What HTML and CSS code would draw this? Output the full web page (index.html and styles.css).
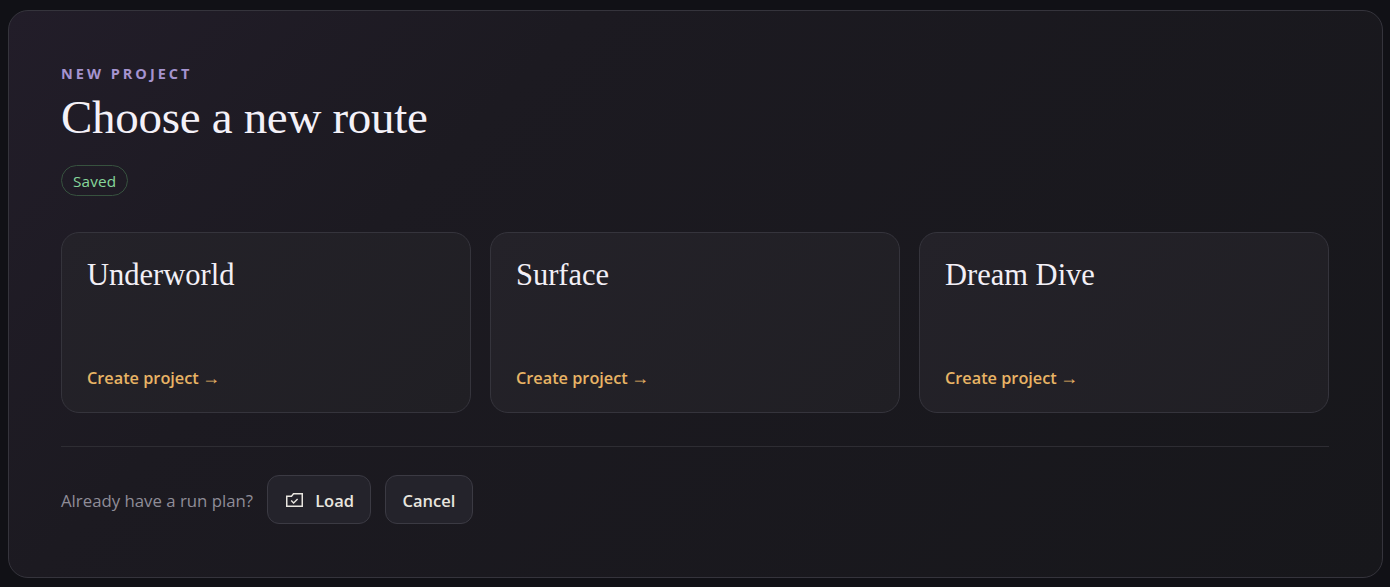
FILE: index.html
```html
<!DOCTYPE html>
<html lang="en">
<head>
<meta charset="utf-8">
<title>New project</title>
<link rel="stylesheet" href="styles.css">
</head>
<body>
<main class="panel">
  <p class="eyebrow">NEW PROJECT</p>
  <h1 class="title">Choose a new route</h1>
  <span class="badge">Saved</span>
  <section class="cards">
    <a class="card"><h2 class="card-title">Underworld</h2><span class="card-link">Create project <span class="arrow">→</span></span></a>
    <a class="card"><h2 class="card-title">Surface</h2><span class="card-link">Create project <span class="arrow">→</span></span></a>
    <a class="card"><h2 class="card-title">Dream Dive</h2><span class="card-link">Create project <span class="arrow">→</span></span></a>
  </section>
  <footer class="footer">
    <span class="hint">Already have a run plan?</span>
    <button class="btn btn-load">
      <svg class="icon" viewBox="0 0 17 14" width="17" height="14" fill="none" stroke="currentColor" stroke-width="1.5"><path d="M.75 13.25V3.25H5.5L7.5.75H16.25V13.25Z"/><path d="M5.2 7.4L7.6 9.9L11.6 5.9" stroke-width="1.4"/></svg>
      Load
    </button>
    <button class="btn btn-cancel">Cancel</button>
  </footer>
</main>
</body>
</html>
```
FILE: styles.css
```css
* { box-sizing: border-box; }
html, body { height: 100%; }
body {
  margin: 0;
  padding: 10px 7px 9px 8px;
  background: #111116;
  font-family: "Open Sans", "Noto Sans", sans-serif;
  overflow: hidden;
}
.panel {
  height: 568px;
  padding: 52px 53px 0 52px;
  border: 1px solid #35343c;
  border-radius: 20px;
  background: linear-gradient(135deg, #221d29 0%, #1c1a21 30%, #17171b 100%);
}
.eyebrow {
  margin: 0;
  height: 22px;
  font-size: 14.5px;
  line-height: 22px;
  font-weight: 700;
  letter-spacing: 3px;
  color: #a593cf;
}
.title {
  margin: 9px 0 0;
  height: 58px;
  font-family: "Liberation Serif", serif;
  font-size: 47px;
  line-height: 46px;
  font-weight: 400;
  letter-spacing: -0.3px;
  color: #f4f1f8;
}
.badge {
  display: inline-flex;
  align-items: center;
  height: 31px;
  margin-top: 13px;
  padding: 0 11px;
  border: 1px solid #37523f;
  border-radius: 16px;
  font-size: 15.3px;
  letter-spacing: 0.15px;
  color: #86d79b;
}
.cards {
  display: grid;
  grid-template-columns: repeat(3, 1fr);
  gap: 19px;
  margin-top: 36px;
}
.card {
  display: flex;
  flex-direction: column;
  justify-content: space-between;
  height: 181px;
  padding: 23px 25px 23px;
  border: 1px solid #35343c;
  border-radius: 18px;
  background: linear-gradient(135deg, #242229 0%, #201f24 100%);
}
.card-title {
  margin: 0;
  font-family: "Liberation Serif", serif;
  font-size: 30.5px;
  line-height: 38px;
  font-weight: 400;
  color: #f2eff6;
}
.card-link {
  font-size: 16.3px;
  line-height: 22px;
  font-weight: 600;
  color: #e8b465;
}
.arrow {
  margin-left: -1px;
  font-family: "Liberation Sans", sans-serif;
  font-size: 18px;
  line-height: 18px;
  font-weight: 400;
}
.footer {
  display: flex;
  align-items: center;
  gap: 14px;
  margin-top: 33px;
  padding-top: 28px;
  border-top: 1px solid #2e2d33;
}
.hint {
  margin-top: 2px;
  font-size: 16.8px;
  color: #8f8d98;
}
.btn {
  display: inline-flex;
  align-items: center;
  gap: 12px;
  height: 49px;
  padding: 2px 16.5px 0;
  border: 1px solid #3b3a43;
  border-radius: 12px;
  background: #24232b;
  font-family: inherit;
  font-size: 16.5px;
  font-weight: 600;
  color: #e8e5df;
}
.btn-load { padding: 2px 16px 0 18px; }
.icon { flex: none; margin-top: -1px; }
```
